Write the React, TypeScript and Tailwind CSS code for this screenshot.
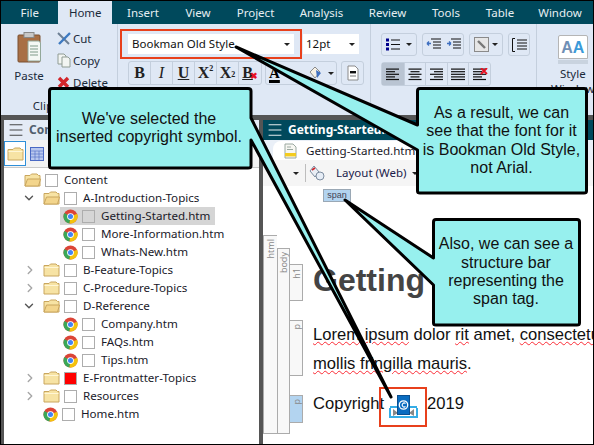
import { ChevronDown, ChevronRight, Menu } from "lucide-react";

const menus = [
  { name: "Insert", w: "w-[58px]" },
  { name: "View", w: "w-[52px]" },
  { name: "Project", w: "w-[63px]" },
  { name: "Analysis", w: "w-[69px]" },
  { name: "Review", w: "w-[63px]" },
  { name: "Tools", w: "w-[54px]" },
  { name: "Table", w: "w-[54px]" },
  { name: "Window", w: "w-[66px]" },
];

const tree = [
  { level: 0, kind: "open", label: "Content" },
  { level: 1, kind: "open", label: "A-Introduction-Topics", arrow: "down" },
  { level: 2, kind: "htm", label: "Getting-Started.htm", selected: true },
  { level: 2, kind: "htm", label: "More-Information.htm" },
  { level: 2, kind: "htm", label: "Whats-New.htm" },
  { level: 1, kind: "closed", label: "B-Feature-Topics", arrow: "right" },
  { level: 1, kind: "closed", label: "C-Procedure-Topics", arrow: "right" },
  { level: 1, kind: "open", label: "D-Reference", arrow: "down" },
  { level: 2, kind: "htm", label: "Company.htm" },
  { level: 2, kind: "htm", label: "FAQs.htm" },
  { level: 2, kind: "htm", label: "Tips.htm" },
  { level: 1, kind: "closed", label: "E-Frontmatter-Topics", arrow: "right", red: true },
  { level: 1, kind: "closed", label: "Resources", arrow: "right" },
  { level: 1, kind: "htm", label: "Home.htm" },
];

function Chrome() {
  return (
    <svg width="15" height="15" viewBox="0 0 16 16" className="shrink-0">
      <circle cx="8" cy="8" r="7.5" fill="#db4437" />
      <path d="M8 8 L1.5 4.2 A7.5 7.5 0 0 0 7 15.4 Z" fill="#3aa757" />
      <path d="M8 8 L15 5 A7.5 7.5 0 0 1 7 15.4 Z" fill="#f4c20d" />
      <circle cx="8" cy="8" r="3.6" fill="#fff" />
      <circle cx="8" cy="8" r="2.7" fill="#4285f4" />
    </svg>
  );
}

function Folder({ open }: { open?: boolean }) {
  return (
    <svg width="17" height="14" viewBox="0 0 17 14" className="shrink-0">
      <path d="M1 2.5 H6 L7.5 1 H13 L14.5 2.5 H16 V13 H1 Z" fill="#f7e3a4" stroke="#c9a65e" />
      {open ? <path d="M1 13 L3.5 6 H16.5 L14.5 13 Z" fill="#f3d58c" stroke="#c9a65e" /> : <path d="M1.5 4.5 H15.5" stroke="#fff6d5" />}
    </svg>
  );
}

function TreeRow({ item }: { item: (typeof tree)[number] }) {
  const pad = item.level === 0 ? "pl-[20px]" : item.level === 1 ? "pl-[39px]" : "pl-[59px]";
  return (
    <div className={`relative flex h-[18px] items-center gap-[5px] ${pad}`}>
      {item.arrow === "down" && <ChevronDown size={14} strokeWidth={2.4} className="absolute left-[18px] text-[#555]" />}
      {item.arrow === "right" && <ChevronRight size={14} strokeWidth={2.4} className="absolute left-[19px] text-[#a6a6a6]" />}
      <div className={`flex h-[18px] items-center gap-[5px] ${item.selected ? "bg-[#d5d5d5] pr-[5px] -ml-[3px] pl-[3px]" : ""}`}>
        {item.kind === "htm" ? <Chrome /> : <Folder open={item.kind === "open"} />}
        <span className={`ml-[-1px] size-[13px] shrink-0 border border-[#adadad] ${item.red ? "bg-[#ff0000]" : ""}`} />
        <span className="ml-[1px] whitespace-nowrap text-[11.6px] text-[#1a1a2a]">{item.label}</span>
      </div>
    </div>
  );
}

function FormatBtn({ children, last }: { children: React.ReactNode; last?: boolean }) {
  return (
    <div className={`flex h-[22px] w-[22px] items-center justify-center font-['Liberation_Serif'] text-[16px] font-bold text-[#222] ${last ? "" : "border-r border-[#c4cfdd]"}`}>
      {children}
    </div>
  );
}

function Lines({ align, cross }: { align: "left" | "center" | "right" | "full"; cross?: boolean }) {
  const rows = [13, 9, 13, 9, 13];
  return (
    <svg width="16" height="13" viewBox="0 0 16 13">
      {rows.map((w, i) => {
        const len = align === "full" ? 14 : w;
        const x = align === "left" || align === "full" ? 1 : align === "center" ? (16 - len) / 2 : 15 - len;
        return <rect key={i} x={x} y={i * 2.6 + 0.5} width={len} height="1.2" fill="#111" />;
      })}
      {cross && <path d="M9 0 L15 6 M15 0 L9 6" stroke="#e81123" strokeWidth="1.8" />}
    </svg>
  );
}

function Structure({ label, className }: { label: string; className: string }) {
  return (
    <div className={`flex justify-center border-[#ababab] pt-[3px] ${className}`}>
      <span className="rotate-180 self-start text-[9px] leading-none text-[#8a8a8a] [writing-mode:vertical-rl]">{label}</span>
    </div>
  );
}

function Callout({ className, children }: { className: string; children: React.ReactNode }) {
  return (
    <div className={`absolute flex items-center justify-center text-center font-['Liberation_Sans'] text-[16px] leading-[18.3px] text-[#111] ${className}`}>
      <p>{children}</p>
    </div>
  );
}

export default function App() {
  return (
    <div className="relative h-[445px] w-[594px] overflow-hidden border border-black bg-[#555] font-['Noto_Sans',sans-serif]">
      {/* Menu */}
      <div className="flex h-[23px] items-end bg-[#00495c] text-[11.5px] text-[#e6eef2]">
        <div className="flex h-full w-[58px] items-center justify-center">File</div>
        <div className="flex h-[23px] w-[54px] items-center justify-center bg-[#dfe8f5] text-[#1b2a3a]">Home</div>
        <div className="ml-[2px] flex h-full">
          {menus.map((m) => (
            <div key={m.name} className={`flex h-full items-center justify-center ${m.w}`}>
              {m.name}
            </div>
          ))}
        </div>
      </div>

      {/* Ribbon */}
      <div className="flex h-[91px] bg-[#dfe8f5] text-[11.5px] text-[#1b2a3a]">
        <div className="flex w-[117px] shrink-0 flex-col border-r border-[#c4cfdd]">
          <div className="flex flex-1 pl-[8px] pt-[8px]">
            <div className="flex w-[40px] flex-col items-center">
              <svg width="24" height="31" viewBox="0 0 24 31">
                <rect x="1" y="3" width="22" height="27" rx="1" fill="#a86f45" stroke="#7a5030" />
                <rect x="7" y="0.5" width="10" height="5" fill="#c8c8c8" stroke="#888" />
                <path d="M11 9 H22 L23.5 11 V29 H11 Z" fill="#f4f8f4" stroke="#93a89a" />
                <path d="M13 14 H21 M13 17 H21 M13 20 H21 M13 23 H21" stroke="#7f9a88" />
              </svg>
              <span className="mt-[4px]">Paste</span>
            </div>
            <div className="ml-[8px] mt-[-2px] flex flex-col gap-[5px]">
              <div className="flex h-[17px] items-center gap-[2px]">
                <svg width="14" height="14" viewBox="0 0 14 14">
                  <path d="M1 1 L12 12" stroke="#6d7f94" strokeWidth="2" />
                  <path d="M13 1 L2 12" stroke="#3e7ac0" strokeWidth="2.4" />
                </svg>
                Cut
              </div>
              <div className="flex h-[17px] items-center gap-[2px]">
                <svg width="14" height="15" viewBox="0 0 14 15">
                  <path d="M1 1 H7 L9 3 V11 H1 Z" fill="#f2f5f2" stroke="#909c94" />
                  <path d="M5 4 H11 L13 6 V14 H5 Z" fill="#f2f5f2" stroke="#909c94" />
                </svg>
                Copy
              </div>
              <div className="flex h-[17px] items-center gap-[3px]">
                <svg width="13" height="13" viewBox="0 0 13 13">
                  <path d="M2 2 L11 11 M11 2 L2 11" stroke="#d3262b" strokeWidth="3.4" />
                </svg>
                Delete
              </div>
            </div>
          </div>
          <div className="h-[16px] text-center leading-[14px]">Clipboard</div>
        </div>

        <div className="flex w-[253px] shrink-0 flex-col border-r border-[#c4cfdd] pl-[2px]">
          <div className="mt-[5px] flex items-center">
            <div className="border-2 border-[#e8401c] px-[6px] py-[3px]">
              <div className="flex h-[20px] w-[166px] items-center justify-between bg-white pl-[4px] pr-[4px] text-[11.5px] text-[#111]">
                Bookman Old Style
                <span className="h-0 w-0 border-x-[3px] border-t-[3px] border-x-transparent border-t-[#222]" />
              </div>
            </div>
            <div className="ml-[1px] flex h-[20px] w-[56px] items-center justify-between bg-white pl-[3px] pr-[4px] text-[11.5px] text-[#111]">
              12pt
              <span className="h-0 w-0 border-x-[3px] border-t-[3px] border-x-transparent border-t-[#222]" />
            </div>
          </div>
          <div className="ml-[8px] mt-[2px] flex items-center">
            <div className="flex h-[24px] rounded-[3px] border border-[#c4cfdd]">
              <FormatBtn>B</FormatBtn>
              <FormatBtn><i className="font-normal">I</i></FormatBtn>
              <FormatBtn><u>U</u></FormatBtn>
              <FormatBtn>X<sup className="text-[8px]">2</sup></FormatBtn>
              <FormatBtn>X<sub className="text-[8px]">2</sub></FormatBtn>
              <FormatBtn last><u>B</u><span className="ml-[-3px] mt-[7px] text-[9px] text-[#e81123]">✖</span></FormatBtn>
            </div>
            <div className="ml-[3px] flex h-[24px] w-[72px] items-center rounded-[3px] border border-[#c4cfdd] pl-[3px]">
              <span className="font-['Liberation_Serif'] text-[15px] font-bold leading-[16px] text-black underline decoration-[3px]">A</span>
              <svg width="18" height="18" viewBox="0 0 18 18" className="ml-[26px]">
                <path d="M4 8 L9 3 L14 8 L9 14 Z" fill="#f6f1e6" stroke="#8a8a8a" />
                <path d="M10 6 L15 9 L11 14 Z" fill="#3f6fc0" />
              </svg>
              <span className="ml-[4px] h-0 w-0 border-x-[3px] border-t-[3px] border-x-transparent border-t-[#222]" />
            </div>
            <div className="ml-[4px] flex h-[24px] w-[23px] items-center justify-center rounded-[3px] border border-[#c4cfdd]">
              <svg width="12" height="16" viewBox="0 0 12 16">
                <path d="M1 1 H8 L11 4 V15 H1 Z" fill="#fff" stroke="#8a8a8a" />
                <rect x="3" y="6" width="6" height="2.4" fill="#111" />
                <path d="M3 11 H9" stroke="#777" />
              </svg>
            </div>
          </div>
          <div className="mt-auto h-[16px] pr-[2px] text-right leading-[14px]">Font</div>
        </div>

        <div className="w-[166px] shrink-0 border-r border-[#c4cfdd] pl-[10px] pt-[9px]">
          <div className="flex items-center gap-[5px]">
            <div className="flex h-[23px] w-[36px] items-center justify-between rounded-[3px] border border-[#c4cfdd] pl-[4px] pr-[4px]">
              <svg width="14" height="13" viewBox="0 0 14 13">
                <path d="M0 0.5 H3 V3.5 H0 Z M0 5 H3 V8 H0 Z M0 9.5 H3 V12.5 H0 Z" fill="#00008b" />
                <path d="M5 2 H14 M5 6.5 H14 M5 11 H14" stroke="#111" />
              </svg>
              <span className="h-0 w-0 border-x-[3px] border-t-[3px] border-x-transparent border-t-[#222]" />
            </div>
            <div className="flex h-[23px] w-[42px] items-center justify-around rounded-[3px] border border-[#c4cfdd]">
              <svg width="15" height="13" viewBox="0 0 15 13">
                <path d="M5 1 H15 M7 4 H15 M7 7 H15 M7 10 H15" stroke="#111" />
                <path d="M5 5.5 H1 M1 5.5 L3 3.5 M1 5.5 L3 7.5" stroke="#3e6fc0" strokeWidth="1.4" fill="none" />
              </svg>
              <svg width="15" height="13" viewBox="0 0 15 13">
                <path d="M5 1 H15 M7 4 H15 M7 7 H15 M7 10 H15" stroke="#111" />
                <path d="M1 5.5 H5 M5 5.5 L3 3.5 M5 5.5 L3 7.5" stroke="#3e6fc0" strokeWidth="1.4" fill="none" />
              </svg>
            </div>
            <div className="flex h-[23px] w-[34px] items-center justify-center gap-[3px] rounded-[3px] border border-[#c4cfdd]">
              <svg width="15" height="15" viewBox="0 0 15 15">
                <rect x="0.5" y="0.5" width="14" height="14" fill="#e6e6e6" stroke="#8a8a8a" />
                <path d="M4 4 L11 11" stroke="#777" strokeWidth="2.4" />
              </svg>
              <span className="h-0 w-0 border-x-[3px] border-t-[3px] border-x-transparent border-t-[#222]" />
            </div>
            <div className="flex h-[23px] w-[22px] items-center justify-center rounded-[3px] border border-[#c4cfdd]">
              <svg width="15" height="14" viewBox="0 0 15 14">
                <path d="M3 0.5 H0.5 V13.5 H3" stroke="#111" fill="none" />
                <path d="M5 2 H15 M5 5 H15 M5 8 H15 M5 11 H15" stroke="#111" />
              </svg>
            </div>
          </div>
          <div className="mt-[6px] flex h-[24px] w-[110px] rounded-[3px] border border-[#c4cfdd]">
            <div className="flex w-[22px] items-center justify-center bg-[#b9c4d2]"><Lines align="left" /></div>
            <div className="flex w-[22px] items-center justify-center border-l border-[#c4cfdd]"><Lines align="center" /></div>
            <div className="flex w-[22px] items-center justify-center border-l border-[#c4cfdd]"><Lines align="right" /></div>
            <div className="flex w-[22px] items-center justify-center border-l border-[#c4cfdd]"><Lines align="full" /></div>
            <div className="flex w-[22px] items-center justify-center border-l border-[#c4cfdd]"><Lines align="left" cross /></div>
          </div>
        </div>

        <div className="flex flex-1 flex-col items-center pl-[14px] pt-[11px]">
          <div className="flex h-[24px] w-[30px] items-end justify-center rounded-t-[2px] border border-[#b5b5b5] bg-white font-['Liberation_Sans'] text-[16px] font-bold leading-[20px] text-[#6f8fb5]">
            A<span className="text-[#3a9ad9]">A</span>
          </div>
          <span className="mt-[1px] h-[4px] w-[30px] bg-[#c9d3df]" />
          <span className="mt-[2px] text-center leading-[15px]">Style<br />Window</span>
        </div>
      </div>

      {/* Panels */}
      <div className="flex h-[329px] pl-[3px] pt-[5px]">
        <div className="flex w-[255px] shrink-0 flex-col bg-white">
          <div className="flex h-[20px] items-center gap-[4px] bg-[#e4ebf6] pl-[3px] text-[12px] font-bold text-[#52606f]">
            <Menu size={18} strokeWidth={1.2} className="text-[#333]" />
            Content Explorer
          </div>
          <div className="flex h-[28px] items-center gap-[4px] border-b border-[#c9c9c9] bg-[#f3f3f3]">
            <div className="flex h-[25px] w-[22px] items-center justify-center border border-[#2f8fd8] bg-white">
              <Folder />
            </div>
            <svg width="14" height="14" viewBox="0 0 14 14">
              <rect x="0.5" y="0.5" width="13" height="13" fill="#b9c8ee" stroke="#4a69c4" />
              <path d="M1 4 H13 M1 7 H13 M1 10 H13 M5 4 V13 M9 4 V13" stroke="#4a69c4" strokeWidth="0.6" />
            </svg>
          </div>
          <div className="pt-[3px]">
            {tree.map((item) => (
              <TreeRow key={item.label} item={item} />
            ))}
          </div>
        </div>

        <div className="ml-[4px] flex min-w-0 flex-1 flex-col bg-white">
          <div className="flex h-[20px] items-center gap-[4px] bg-[#00495c] pl-[3px] text-[12px] font-bold text-white">
            <Menu size={18} strokeWidth={1.2} />
            Getting-Started.htm
          </div>
          <div className="flex h-[20px] items-end bg-[#e9eff7] pl-[10px]">
            <div className="flex h-[19px] items-center gap-[9px] rounded-t-[8px] bg-white pl-[11px] pr-[8px] text-[11.6px] text-[#1a1a2a]">
              <svg width="13" height="16" viewBox="0 0 13 16">
                <path d="M1 1 H9 L12 4 V15 H1 Z" fill="#f7f7f2" stroke="#9aa8a0" />
                <path d="M3 4 H7 M3 6.5 H9" stroke="#9aa8a0" />
                <rect x="1" y="10" width="11" height="3.4" fill="#f3cb1e" />
              </svg>
              Getting-Started.htm
            </div>
          </div>
          <div className="flex h-[26px] items-center bg-[#f5f5f5] text-[11.5px] text-[#1b1b4a]">
            <span className="ml-[30px] h-0 w-0 border-x-[3px] border-t-[3px] border-x-transparent border-t-[#222]" />
            <span className="ml-[6px] h-[18px] w-px bg-[#bdbdbd]" />
            <svg width="17" height="17" viewBox="0 0 17 17" className="ml-[3px]">
              <path d="M1 6 L5 1 L10 7 L6 12 Z" fill="#e9eef5" stroke="#7d8da0" />
              <path d="M3 5 L6 3" stroke="#d3262b" strokeWidth="1.6" />
              <circle cx="11" cy="11" r="4" fill="#e6edf6" stroke="#7d8da0" />
            </svg>
            <span className="ml-[10px]">Layout (Web)</span>
            <span className="ml-[6px] h-0 w-0 border-x-[3px] border-t-[3px] border-x-transparent border-t-[#222]" />
          </div>

          <div className="flex min-h-0 flex-1 overflow-hidden">
            <div className="flex w-[40px] shrink-0 bg-white pt-[49px]">
              <Structure label="html" className="h-[199px] w-[14px] border border-r-0 bg-[#f8f8f8]" />
              <div className="h-[199px] pt-[13px]">
                <Structure label="body" className="h-[186px] w-[13px] border bg-[#f8f8f8]" />
              </div>
              <div className="flex h-[199px] w-[13px] flex-col pt-[29px]">
                <Structure label="h1" className="h-[37px] w-[13px] border border-l-0 bg-[#f8f8f8]" />
                <Structure label="p" className="mt-[19px] h-[56px] w-[13px] border border-l-0 bg-[#f8f8f8]" />
                <Structure label="p" className="mt-[19px] h-[28px] w-[13px] border border-l-0 bg-[#b3d4f0]" />
              </div>
            </div>
            <div className="min-w-0 flex-1 overflow-hidden pl-[10px] font-['Liberation_Sans'] whitespace-nowrap">
              <div className="ml-[10px] mt-[3px] flex h-[13px] w-[28px] items-center justify-center border border-[#9aa8b5] bg-[#b3d4f0] text-[9px] leading-none text-[#445]">
                span
              </div>
              <h1 className="mt-[60px] text-[32px] font-bold leading-[37px] text-[#444]">Getting Started</h1>
              <p className="mt-[21px] text-[16.6px] leading-[29px] text-[#111]">
                <span className="underline decoration-red-500 decoration-wavy decoration-1">Lorem ipsum</span> dolor{" "}
                <span className="underline decoration-red-500 decoration-wavy decoration-1">rit</span> amet,{" "}
                <span className="underline decoration-red-500 decoration-wavy decoration-1">consectetur</span>
                <br />
                <span className="underline decoration-red-500 decoration-wavy decoration-1">mollis fringilla mauris</span>.
              </p>
              <div className="mt-[12px] flex h-[29px] items-center text-[16.6px] text-[#111]">
                Copyright
                <span className="ml-[5px] mr-[9px] flex h-[29px] w-[29px] items-end justify-center">
                  <svg width="29" height="24" viewBox="0 0 29 24">
                    <path d="M1 13 V22 H28 V13" fill="none" stroke="#35ade6" strokeWidth="2" />
                    <path d="M1 12 H9 M20 12 H28" stroke="#35ade6" strokeWidth="2" />
                    <path d="M4 14 L9 18 L4 21 Z M25 14 L20 18 L25 21 Z" fill="#888" />
                    <rect x="8.5" y="0.5" width="12" height="19" fill="#0a6cc0" stroke="#0a4f90" />
                    <circle cx="14.5" cy="10" r="4.2" fill="none" stroke="#fff" strokeWidth="1.3" />
                    <path d="M16.5 8.5 A2 2 0 1 0 16.5 11.5" fill="none" stroke="#fff" strokeWidth="1.1" />
                  </svg>
                </span>
                2019
              </div>
            </div>
          </div>
        </div>
      </div>

      {/* Callouts */}
      <div className="absolute left-[378px] top-[386px] h-[40px] w-[48px] border-[2px] border-[#e8401c]" />
      <svg width="594" height="445" viewBox="0 0 594 445" className="pointer-events-none absolute -left-px -top-px">
        <g fill="#97f0ee" stroke="#000" strokeWidth="3" strokeLinejoin="round">
          <path d="M52 88.5 H248 Q251 88.5 251 91 V118 L391 397 L251 140 V166 Q251 168 248 168 H52 Q49.5 168 49.5 166 V91 Q49.5 88.5 52 88.5 Z" />
          <path d="M420 88.5 H584 Q586.5 88.5 586.5 91 V191 Q586.5 193 584 193 H420 Q417.5 193 417.5 191 V150 L236 47 L417.5 125 V91 Q417.5 88.5 420 88.5 Z" />
          <path d="M436 219.5 H577 Q579.5 219.5 579.5 222 V323 Q579.5 325 577 325 H436 Q433.5 325 433.5 323 V285 L345 200 L433.5 258 V222 Q433.5 219.5 436 219.5 Z" />
        </g>
      </svg>
      <Callout className="left-[48px] top-[87px] h-[80px] w-[200px]">We've selected the<br />inserted copyright symbol.</Callout>
      <Callout className="left-[416px] top-[87px] h-[105px] w-[169px]">As a result, we can<br />see that the font for it<br />is Bookman Old Style,<br />not Arial.</Callout>
      <Callout className="left-[432px] top-[218px] h-[106px] w-[146px]">Also, we can see a<br />structure bar<br />representing the<br />span tag.</Callout>
    </div>
  );
}
